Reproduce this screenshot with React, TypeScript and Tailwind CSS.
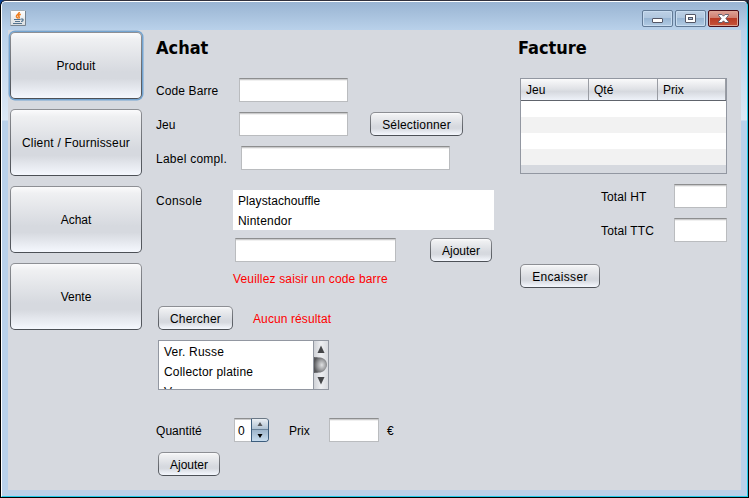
import React from "react";
import clsx from "clsx";

function Button({ children, className }: { children: React.ReactNode; className?: string }) {
  return (
    <button
      className={clsx(
        "flex shrink-0 items-center justify-center rounded-[5px] bg-linear-to-b from-[#8e9095] to-[#4c5056] p-px text-black",
        className,
      )}
    >
      <span className="flex h-full w-full items-center justify-center rounded-[4px] bg-[linear-gradient(to_bottom,#fbfbfc_0%,#eff0f2_10%,#d6d9df_60%,#d6d9df_70%,#f5f8fe_100%)] pt-px">
        {children}
      </span>
    </button>
  );
}

function Field({ className }: { className?: string }) {
  return (
    <input
      className={clsx(
        "h-6 shrink-0 border border-[#babcbf] border-t-[#8d8e8f] bg-white shadow-[inset_0_1px_0_#cbcbcc,inset_0_2px_0_#f0f0f0] outline-none",
        className,
      )}
    />
  );
}

function JavaIcon() {
  return (
    <svg width="16" height="16" viewBox="0 0 16 16" className="shrink-0">
      <defs>
        <linearGradient id="tile" x1="0" y1="0" x2="0" y2="1">
          <stop offset="0" stopColor="#ffffff" />
          <stop offset="1" stopColor="#d9dde0" />
        </linearGradient>
      </defs>
      <rect x="0.5" y="0.5" width="15" height="15" rx="0.8" fill="url(#tile)" stroke="#a3afb9" />
      <path d="M0.500 15.500H15.500V1" fill="none" stroke="#76838f" />
      <path d="M9.300 2C9.600 4 6 4.600 6.400 6.500C6.600 7.300 7.600 7.800 7.900 8.600M10.800 4.300C8.500 5 8 5.700 9 6.600C9.600 7.300 9.200 8 8.700 8.500" fill="none" stroke="#ee7d1d" strokeWidth="1.500" />
      <path d="M4 9.500H10.500M5 11.500H10M3 13.500H12M10.800 9.100C14 8.500 13.800 11 11 11.500" fill="none" stroke="#52738f" strokeWidth="1.200" />
    </svg>
  );
}

function CaptionButton({ close, children }: { close?: boolean; children: React.ReactNode }) {
  return (
    <button
      className={clsx(
        "flex h-[17px] w-[31px] items-center justify-center rounded-[2px] border",
        close
          ? "border-[#4b0d18] bg-[linear-gradient(to_bottom,#dfa297_0%,#d07f70_45%,#b93b25_50%,#c6533a_100%)] shadow-[inset_0_0_0_1px_#dea493]"
          : "border-[#627a96] bg-[linear-gradient(to_bottom,#bdd0e5_0%,#b0c7df_45%,#98b5d3_50%,#b2cbe4_100%)] shadow-[inset_0_0_0_1px_#c8dcf0]",
      )}
    >
      {children}
    </button>
  );
}

function TitleBar() {
  return (
    <header className="flex h-7 shrink-0 items-start justify-between bg-linear-to-b from-[#99b4d2] to-[#b9d1ea] pl-2 pr-2">
      <div className="pt-2">
        <JavaIcon />
      </div>
      <div className="flex gap-0.5 pt-2">
        <CaptionButton>
          <svg width="13" height="13" viewBox="0 0 13 13">
            <rect x="1.500" y="6.500" width="10" height="4" rx="0.500" fill="#fff" stroke="#535666" />
          </svg>
        </CaptionButton>
        <CaptionButton>
          <svg width="13" height="13" viewBox="0 0 13 13">
            <rect x="1.500" y="2.500" width="10" height="8" rx="0.500" fill="#fff" stroke="#535666" />
            <rect x="4.500" y="5.500" width="4" height="2" fill="#a8c0db" stroke="#535666" />
          </svg>
        </CaptionButton>
        <CaptionButton close>
          <svg width="13" height="13" viewBox="0 0 13 13">
            <path d="M1.500 2.500H4.900L6.500 4.200L8.100 2.500H11.500V3.300L8.900 6.500L11.500 9.700V10.500H8.100L6.500 8.800L4.900 10.500H1.500V9.700L4.100 6.500L1.500 3.300Z" fill="#fff" stroke="#535666" strokeWidth="0.900" />
          </svg>
        </CaptionButton>
      </div>
    </header>
  );
}

function Sidebar() {
  return (
    <nav className="flex w-[134px] shrink-0 flex-col gap-2.5 pl-0.5 pt-0.5">
      <Button className="h-[67px] tracking-[0.15px] shadow-[0_0_0_1.5px_#73a4d1]">Produit</Button>
      <Button className="h-[67px] tracking-[0.2px]">Client / Fournisseur</Button>
      <Button className="h-[67px]">Achat</Button>
      <Button className="h-[67px]">Vente</Button>
    </nav>
  );
}

const heading = "h-9 pt-1.5 font-['DejaVu_Sans_Condensed','DejaVu_Sans',sans-serif] text-[18px] leading-6 font-bold [font-stretch:condensed]";

function Scrollbar() {
  return (
    <div className="flex w-[15px] shrink-0 flex-col items-center justify-between border-l border-[#9297a1] bg-linear-to-r from-[#cfd1d6] via-[#eeeff2] to-[#d9dbe0]">
      <svg width="14" height="48" viewBox="0 0 14 48">
        <defs>
          <radialGradient id="thumb" cx="0.6" cy="0.5" r="0.6">
            <stop offset="0" stopColor="#e0e1e3" />
            <stop offset="0.5" stopColor="#a0a1a4" />
            <stop offset="1" stopColor="#56575a" />
          </radialGradient>
        </defs>
        <path d="M7 4.500L10.500 12H3.500Z" fill="#454649" />
        <path d="M0 16C3 17 9 15 12 20Q14 24 12 27C9 33 4 31 0 32Z" fill="url(#thumb)" />
        <path d="M3.500 36H10.500L7 43.500Z" fill="#454649" />
      </svg>
    </div>
  );
}

function Spinner() {
  return (
    <div className="flex h-6 w-[35px] shrink-0">
      <div className="flex w-[17px] items-center border border-r-0 border-[#babcbf] border-t-[#8d8e8f] bg-white pl-[3px] pt-px shadow-[inset_0_1px_0_#cbcbcc]">
        0
      </div>
      <div className="flex w-[18px] flex-col rounded-r-[4px] border border-[#3c5d7d] border-t-[#6b7885]">
        <div className="flex h-[11px] items-center justify-center rounded-tr-[3px] border-b border-[#688199] bg-linear-to-b from-[#e9eef3] to-[#b0c3d4]">
          <svg width="6" height="4" viewBox="0 0 6 4"><path d="M0.500 4L3 0L5.500 4Z" fill="#55585c" /></svg>
        </div>
        <div className="flex flex-1 items-center justify-center rounded-br-[3px] bg-linear-to-b from-[#9eb5ca] to-[#c7dcee]">
          <svg width="6" height="4" viewBox="0 0 6 4"><path d="M0.500 0H5.500L3 4Z" fill="#000" /></svg>
        </div>
      </div>
    </div>
  );
}

function Purchase() {
  return (
    <main className="flex w-[338px] shrink-0 flex-col">
      <h1 className={heading}>Achat</h1>
      <div className="mt-3 flex h-6 items-center">
        <label className="w-[83px] pt-px tracking-[0.1px]">Code Barre</label>
        <Field className="w-[109px]" />
      </div>
      <div className="mt-2.5 flex h-6 items-center">
        <label className="w-[83px] pt-px">Jeu</label>
        <Field className="w-[109px]" />
        <Button className="ml-[22px] h-6 w-[93px] tracking-[0.17px]">Sélectionner</Button>
      </div>
      <div className="mt-2.5 flex h-6 items-center">
        <label className="w-[85px] pt-px tracking-[0.25px]">Label compl.</label>
        <Field className="w-[209px]" />
      </div>
      <div className="mt-5 flex h-10">
        <label className="w-[77px] pt-px leading-5 tracking-[0.3px]">Console</label>
        <ul className="w-[261px] bg-white pl-[5px] leading-5">
          <li className="h-5 pt-px tracking-[0.08px]">Playstachouffle</li>
          <li className="h-5 pt-px tracking-[0.2px]">Nintendor</li>
        </ul>
      </div>
      <div className="mt-2 flex h-6 pl-[79px]">
        <Field className="w-[161px]" />
        <Button className="ml-[34px] h-6 w-[62px]">Ajouter</Button>
      </div>
      <p className="mt-[7px] h-5 pl-[77px] leading-5 tracking-[0.16px] text-[#ff0000]">Veuillez saisir un code barre</p>
      <div className="mt-[17px] flex h-6 items-center pl-0.5">
        <Button className="h-6 w-[75px] tracking-[0.22px]">Chercher</Button>
        <span className="pl-5 pt-px tracking-[0.1px] text-[#ff0000]">Aucun résultat</span>
      </div>
      <div className="ml-0.5 mt-2.5 flex h-[50px] w-[171px] overflow-hidden border border-[#9297a1] bg-white">
        <ul className="flex-1 pl-[5px] leading-5">
          <li className="h-5 pt-px tracking-[0.2px]">Ver. Russe</li>
          <li className="h-5 pt-px tracking-[0.18px]">Collector platine</li>
          <li className="h-5 pt-px">Vers.</li>
        </ul>
        <Scrollbar />
      </div>
      <div className="mt-7 flex h-6 items-center">
        <label className="w-[78px] pt-px tracking-[0.05px]">Quantité</label>
        <Spinner />
        <label className="ml-5 w-10 pt-px">Prix</label>
        <Field className="w-[50px]" />
        <span className="pl-2 pt-px">€</span>
      </div>
      <Button className="ml-0.5 mt-2.5 h-6 w-[62px]">Ajouter</Button>
    </main>
  );
}

function Invoice() {
  return (
    <aside className="flex w-[209px] shrink-0 flex-col">
      <h1 className={heading}>Facture</h1>
      <div className="ml-0.5 mt-3 flex h-24 w-[207px] flex-col border border-[#9297a1]">
        <div className="flex h-[22px] border-b border-[#60646c] bg-[linear-gradient(to_bottom,#fafafb_0%,#e1e3e7_45%,#d6d9df_60%,#eef2f9_100%)] leading-[22px]">
          <span className="w-[68px] border-r border-[#9a9da4] pl-[5px]">Jeu</span>
          <span className="w-[69px] border-r border-[#9a9da4] pl-[5px]">Qté</span>
          <span className="w-[68px] border-r border-[#9a9da4] pl-[5px]">Prix</span>
        </div>
        <div className="h-4 bg-white" />
        <div className="h-4 bg-[#f2f2f2]" />
        <div className="h-4 bg-white" />
        <div className="h-4 bg-[#f2f2f2]" />
      </div>
      <div className="mt-2.5 flex h-6 items-center pl-[83px]">
        <label className="w-[73px] pt-px tracking-[0.1px]">Total HT</label>
        <Field className="w-[53px]" />
      </div>
      <div className="mt-2.5 flex h-6 items-center pl-[83px]">
        <label className="w-[73px] pt-px tracking-[0.15px]">Total TTC</label>
        <Field className="w-[53px]" />
      </div>
      <Button className="ml-0.5 mt-[22px] h-6 w-20 tracking-[0.3px]">Encaisser</Button>
    </aside>
  );
}

export default function App() {
  return (
    <div className="h-[498px] w-[749px] overflow-hidden bg-[linear-gradient(to_right,#0645a0_0,#26293a_8px)] font-['Liberation_Sans',Arial,sans-serif] text-[12px] leading-4 text-black">
      <div className="h-full rounded-t-[6px] border border-black border-t-[#30303c]">
        <div className="flex h-full flex-col overflow-hidden rounded-t-[5px] border border-[#21cbe9] border-l-white border-t-white bg-[#b9d1ea]">
          <TitleBar />
          <div className="flex flex-1 bg-[linear-gradient(to_bottom,#b9d1ea_0px,#dce8f5_90px,#b9d1ea_91px)] px-1.5 pb-1.5">
            <div className="flex flex-1 bg-[#d6d9df]">
              <Sidebar />
              <div className="flex pl-3.5">
                <Purchase />
                <div className="w-6 shrink-0" />
                <Invoice />
              </div>
            </div>
          </div>
        </div>
      </div>
    </div>
  );
}
